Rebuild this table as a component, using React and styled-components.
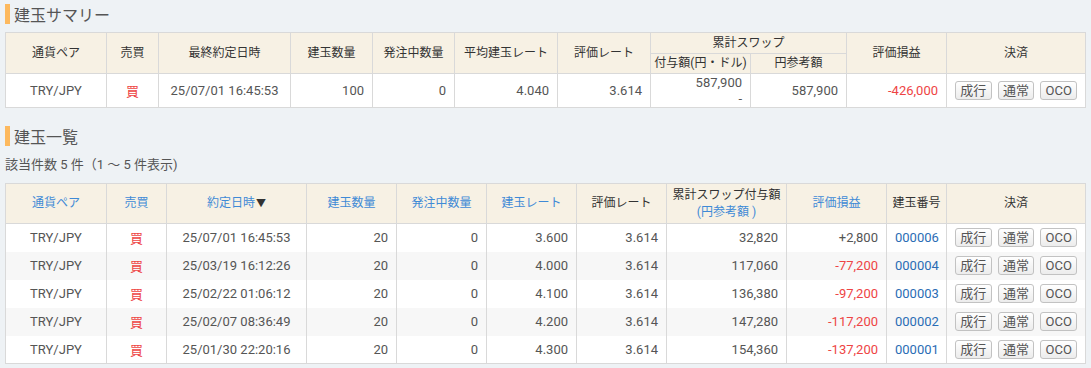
import React from "react";
import styled, { createGlobalStyle } from "styled-components";

const GlobalStyle = createGlobalStyle`
	body {
		margin: 0;
		background: #eef2f5;
		font-family: Roboto, "Noto Sans CJK JP", sans-serif;
		color: #555;
	}
`;

const summaryCols = [101, 52, 132, 82, 82, 103, 93, 100, 96, 100, 139];
const listCols = [101, 60, 140, 90, 90, 90, 90, 120, 100, 60, 139];

const positions = [
	{ date: "25/07/01 16:45:53", qty: 20, rate: "3.600", swap: "32,820", pl: "+2,800", no: "000006" },
	{ date: "25/03/19 16:12:26", qty: 20, rate: "4.000", swap: "117,060", pl: "-77,200", no: "000004" },
	{ date: "25/02/22 01:06:12", qty: 20, rate: "4.100", swap: "136,380", pl: "-97,200", no: "000003" },
	{ date: "25/02/07 08:36:49", qty: 20, rate: "4.200", swap: "147,280", pl: "-117,200", no: "000002" },
	{ date: "25/01/30 22:20:16", qty: 20, rate: "4.300", swap: "154,360", pl: "-137,200", no: "000001" },
];

const SettleButtons = () => (
	<Buttons>
		<Btn>成行</Btn>
		<Btn>通常</Btn>
		<Btn>OCO</Btn>
	</Buttons>
);

const App = () => {
	return (
		<Page>
			<GlobalStyle />
			<Title>建玉サマリー</Title>
			<Table>
				<colgroup>
					{summaryCols.map((w, i) => (
						<col key={i} style={{ width: w }} />
					))}
				</colgroup>
				<thead>
					<tr>
						<Th rowSpan={2} $h={20}>通貨ペア</Th>
						<Th rowSpan={2}>売買</Th>
						<Th rowSpan={2}>最終約定日時</Th>
						<Th rowSpan={2}>建玉数量</Th>
						<Th rowSpan={2}>発注中数量</Th>
						<Th rowSpan={2}>平均建玉レート</Th>
						<Th rowSpan={2}>評価レート</Th>
						<Th colSpan={2} $h={20}>累計スワップ</Th>
						<Th rowSpan={2}>評価損益</Th>
						<Th rowSpan={2}>決済</Th>
					</tr>
					<tr>
						<Th $h={19}>付与額(円・ドル)</Th>
						<Th>円参考額</Th>
					</tr>
				</thead>
				<tbody>
					<Row $h={34}>
						<Td>TRY/JPY</Td>
						<Td $red>買</Td>
						<Td>25/07/01 16:45:53</Td>
						<Td $right>100</Td>
						<Td $right>0</Td>
						<Td $right>4.040</Td>
						<Td $right>3.614</Td>
						<Td $right>
							<Stack>
								<span>587,900</span>
								<span>-</span>
							</Stack>
						</Td>
						<Td $right>587,900</Td>
						<Td $right $red>-426,000</Td>
						<Td>
							<SettleButtons />
						</Td>
					</Row>
				</tbody>
			</Table>

			<Title $top={18}>建玉一覧</Title>
			<Count>該当件数 5 件（1 ～ 5 件表示)</Count>
			<Table>
				<colgroup>
					{listCols.map((w, i) => (
						<col key={i} style={{ width: w }} />
					))}
				</colgroup>
				<thead>
					<tr>
						<Th $h={39} $link>通貨ペア</Th>
						<Th $link>売買</Th>
						<Th $link>
							約定日時<Arrow>▼</Arrow>
						</Th>
						<Th $link>建玉数量</Th>
						<Th $link>発注中数量</Th>
						<Th $link>建玉レート</Th>
						<Th>評価レート</Th>
						<Th>
							累計スワップ付与額
							<br />
							<SubLink>(円参考額 )</SubLink>
						</Th>
						<Th $link>評価損益</Th>
						<Th>建玉番号</Th>
						<Th>決済</Th>
					</tr>
				</thead>
				<tbody>
					{positions.map((p, i) => (
						<Row key={p.no} $h={28} $alt={i % 2 === 1}>
							<Td>TRY/JPY</Td>
							<Td $red>買</Td>
							<Td>{p.date}</Td>
							<Td $right>{p.qty}</Td>
							<Td $right>0</Td>
							<Td $right>{p.rate}</Td>
							<Td $right>3.614</Td>
							<Td $right>{p.swap}</Td>
							<Td $right $red={p.pl.startsWith("-")}>{p.pl}</Td>
							<Td $blue>{p.no}</Td>
							<Td>
								<SettleButtons />
							</Td>
						</Row>
					))}
				</tbody>
			</Table>
		</Page>
	);
};

export default App;

const Page = styled.div`
	padding: 4px 6px 6px 5px;
`;

const Title = styled.h2`
	display: flex;
	align-items: center;
	margin: ${({ $top }) => $top || 0}px 0 8px;
	height: 20px;
	font-size: 16px;
	font-weight: normal;
	color: #555;
	&::before {
		content: "";
		width: 5px;
		height: 20px;
		background: #fdb95e;
		margin-right: 4px;
	}
`;

const Count = styled.div`
	font-size: 13px;
	color: #555;
	margin: 10px 0 9px;
	height: 18px;
	line-height: 18px;
`;

const Table = styled.table`
	width: 1080px;
	table-layout: fixed;
	border-collapse: collapse;
	background: #fff;
	border: 1px solid #d9d9d9;
	font-size: 12px;
`;

const Th = styled.th`
	height: ${({ $h }) => ($h ? `${$h}px` : "auto")};
	padding: 0;
	background: #f7f1e4;
	border: 1px solid #d9d9d9;
	font-weight: normal;
	color: ${({ $link }) => ($link ? "#3f8ad6" : "#333")};
	line-height: 17px;
	white-space: nowrap;
`;

const SubLink = styled.span`
	color: #3f8ad6;
`;

const Arrow = styled.span`
	font-size: 10px;
	color: #333;
	margin-left: 1px;
`;

const Row = styled.tr`
	height: ${({ $h }) => $h}px;
	background: ${({ $alt }) => ($alt ? "#f7f7f7" : "#fff")};
`;

const Td = styled.td`
	padding: 0 8px;
	border-left: 1px solid #d9d9d9;
	border-right: 1px solid #d9d9d9;
	text-align: ${({ $right }) => ($right ? "right" : "center")};
	color: ${({ $red, $blue }) => ($red ? "#ee4444" : $blue ? "#2a6db5" : "#555")};
	font-size: 13px;
	white-space: nowrap;
`;

const Stack = styled.div`
	display: flex;
	flex-direction: column;
	align-items: flex-end;
	line-height: 16px;
`;

const Buttons = styled.div`
	display: flex;
	justify-content: center;
	gap: 6px;
`;

const Btn = styled.button`
	width: 38px;
	height: 19px;
	padding: 0;
	font-family: Roboto, "Noto Sans CJK JP", sans-serif;
	font-size: 13px;
	color: #555;
	background: linear-gradient(#ffffff, #ececec);
	border: 1px solid #c2c2c2;
	border-radius: 3px;
	line-height: 17px;
`;
